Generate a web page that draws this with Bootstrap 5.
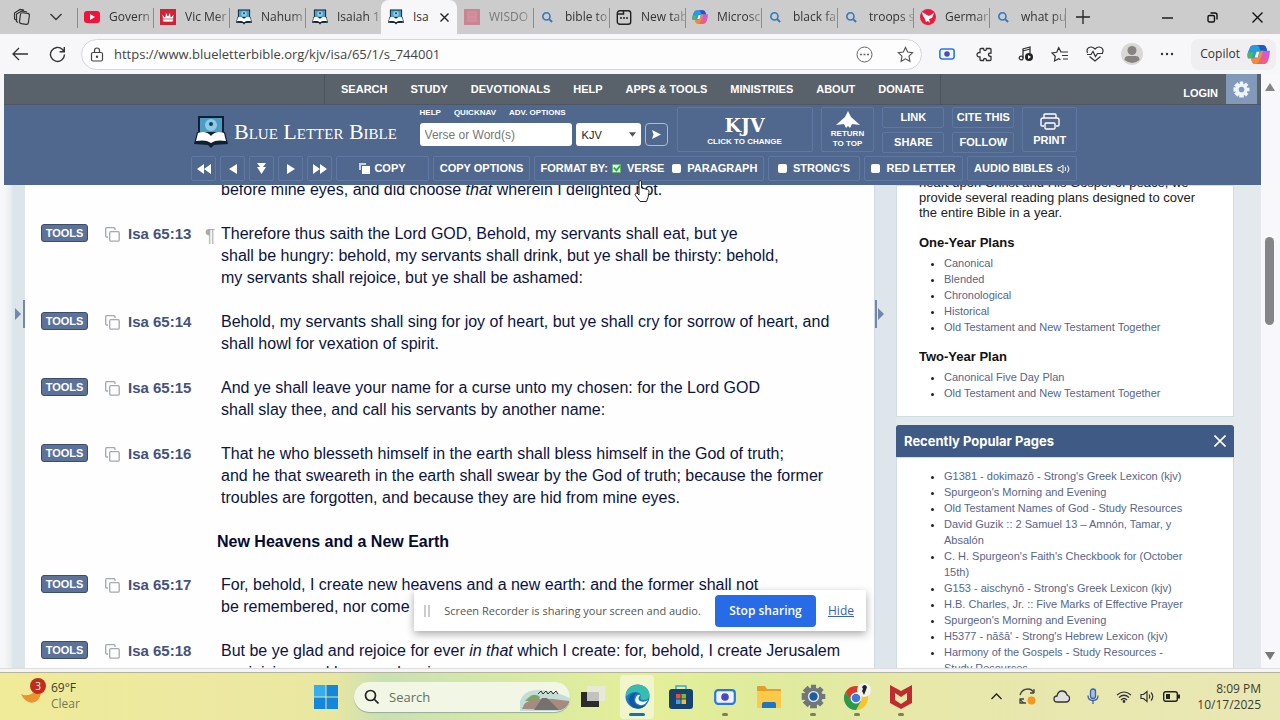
<!DOCTYPE html>
<html lang="en">
<head>
<meta charset="utf-8">
<meta name="viewport" content="width=device-width, initial-scale=1">
<title>Isaiah 65 (KJV) - Blue Letter Bible</title>
<link href="https://cdn.jsdelivr.net/npm/bootstrap@5.3.0/dist/css/bootstrap.min.css" rel="stylesheet">
<style>
:root { --ui: "Open Sans", "Noto Sans", sans-serif; --web: "Liberation Sans", Arial, sans-serif; --blb: #50678e; --line: #5f78a1; }
body { font-family: var(--ui); font-size: 12px; line-height: 16px; background: #f7f7f9; }
svg { display: block; flex: none; }
button { font: inherit; color: inherit; background: none; border: 0; padding: 0; }
a { text-decoration: none; }

/* browser tabs */
.tabstrip { height: 34px; background: #cdcccd; color: #333; }
.tabtools { width: 77px; padding-left: 13px; gap: 19px; }
.tabitem { flex: 0 1 76px; min-width: 0; height: 34px; gap: 9px; padding-left: 7px; position: relative; text-align: left; }
.tabitem::before { content: ""; position: absolute; left: 0; top: 8px; height: 20px; border-left: 1px solid #8d8b8e; }
.tabitem span { overflow: hidden; white-space: nowrap; flex: 1; min-width: 0; -webkit-mask-image: linear-gradient(90deg, #000 70%, #0004); mask-image: linear-gradient(90deg, #000 70%, #0004); }
.tabitem.current { background: #f7f7f9; border-radius: 8px 8px 0 0; }
.tabitem.current::before, .tabitem.current + .tabitem::before { display: none; }
.tabitem.current span { mask-image: none; -webkit-mask-image: none; }
.tabitem.quiet { color: #777; }
.tabitem.plus { padding-left: 11px; }
.magicon { margin: 0 3px 0 2px; }
.wincontrols { gap: 34px; padding-right: 17px; color: #111; }

/* address row */
.addressrow { height: 40px; padding: 0 4px 0 12px; color: #333; }
.omnibox { height: 31px; border: 1px solid #d6d5d8; border-radius: 16px; background: #fdfdfe; padding: 0 7px 0 8px; margin: 0 17px 0 15px; }
.omnibox input { border: 0; background: none; outline: 0; font-size: 13px; color: #444; padding: 0; margin-left: 10px; min-width: 0; }
.toolset { gap: 17px; }
.copilot { background: #efeff1; border-radius: 8px; height: 31px; padding: 0 6px 0 9px; gap: 7px; }

/* site header */
.viewport { min-height: 0; background: linear-gradient(90deg, #f7f7f9 4px, #e8edf0 11px, #dbe5ea 13px, #dbe5ea 25px, #e4e9ed 1000px); overflow: hidden; }
.siteheader { margin-left: 4px; font-family: var(--web); font-weight: 700; font-size: 11px; line-height: 13px; color: #fff; }
.siteheader a { color: #fff; }
.menubar { height: 31px; background: #59616b; border-bottom: 1px solid #4d5661; position: relative; }
.mainmenu { gap: 23px; border: solid #4b535d; border-width: 0 1px; padding: 0 16px; }
.userlinks { position: absolute; right: 0; top: 0; height: 30px; gap: 8px; padding-right: 4px; }
.gear { width: 31px; height: 30px; background: #8299ba; display: grid; place-items: center; }
.bluebar { height: 80px; background: var(--blb); padding-top: 2px; }
.headinner { width: 889px; max-width: 100%; margin: 0 auto; padding-left: 3px; }
.hbtn { border: 1px solid var(--line); display: flex; align-items: center; justify-content: center; white-space: nowrap; border-radius: 2px; }
.toprow { height: 49px; }
.brand { width: 230px; padding-left: 3px; gap: 6px; font: 22px/24px "Liberation Serif", serif; font-variant: small-caps; }
.quick { font-size: 8px; line-height: 10px; gap: 13px; padding: 1px 0 5px; }
.finder input { width: 152px; height: 23px; border: 0; border-radius: 3px; padding: 0 5px; font: 12px var(--web); color: #333; }
.finder input::placeholder { color: #777; }
.finder select { width: 65px; height: 23px; border: 0; border-radius: 3px; font: 11px var(--web); color: #222; padding: 0 6px; appearance: none; background: #fff url("data:image/svg+xml,%3Csvg xmlns='http://www.w3.org/2000/svg' viewBox='0 0 8 5'%3E%3Cpath d='M0 0h8L4 5z' fill='%23555'/%3E%3C/svg%3E") no-repeat right 5px center / 7px 5px; }
.go { width: 23px; height: 23px; border: 1px solid #a9bad3; border-radius: 4px; display: grid; place-items: center; }
.version { width: 137px; height: 45px; flex-direction: column; font-size: 8px; line-height: 10px; margin-left: 9px; }
.version b { font: 700 19px/24px "DejaVu Serif", serif; }
.totop { width: 54px; height: 45px; flex-direction: column; font-size: 8px; line-height: 10px; text-align: center; }
.pair .hbtn { width: 62px; height: 21px; }
.print { width: 55px; height: 45px; flex-direction: column; gap: 4px; }
.toolrow { gap: 4px; }
.toolrow .hbtn { height: 25px; }
.arrowbtn { width: 25px; }
.w-copy { width: 93px; }
.w-options { width: 97px; }
.w-strongs { width: 92px; }
.w-red { width: 99px; }
.w-audio { width: 110px; }
.siteheader input[type=checkbox] { appearance: none; width: 9px; height: 9px; margin: 0 6px 0 0; border-radius: 2px; background: #fff; }
.siteheader input[type=checkbox]:checked { background: #fff url("data:image/svg+xml,%3Csvg xmlns='http://www.w3.org/2000/svg' viewBox='0 0 10 10'%3E%3Crect x='.5' y='.5' width='9' height='9' rx='1' fill='%23dff5df' stroke='%2349b05a'/%3E%3Cpath d='M2 4l3 3 4-5' fill='none' stroke='%232fa347' stroke-width='2'/%3E%3C/svg%3E"); }

/* page body */
.pagebody { min-height: 0; overflow: hidden; padding-left: 25px; font-family: var(--web); }
.passage { flex: 1; background: #fefefe; padding: 0 16px; overflow: hidden; position: relative; }
.verses { margin-top: -6px; font-size: 16px; line-height: 22px; color: #0b1444; }
.verse { display: flex; margin-bottom: 22px; white-space: nowrap; }
.verse p, .verses h2 { margin: 0; }
.verses h2 { font-size: 16px; line-height: 22px; font-weight: 700; color: #050b33; margin: 0 0 21px 176px; }
.ref { width: 180px; display: flex; align-items: flex-start; flex: none; }
.ref a { color: #43527f; font-size: 15px; font-weight: 700; margin-left: 8px; line-height: 21px; }
.ref svg { margin: 4px 0 0 17px; }
.toolsbtn { width: 47px; height: 18px; margin-top: 1px; border: 1px solid #3b4d6d; border-radius: 3px; background: #5c7299; color: #fff; font-size: 11px; font-weight: 700; line-height: 16px; }
.pilcrow { width: 16px; margin-left: -16px; color: #aaa; font-size: 19px; line-height: 26px; height: 22px; }
.gutter { width: 22px; background: #dee6ec; border-left: 1px solid #d0dae2; position: relative; }
.handle { position: absolute; top: 115px; }
.handle.start { left: 15px; top: 226px; }
.sidebar { width: 338px; flex: none; }
.sidebox { background: #fff; border: 1px solid #d0dce3; padding: 0 22px; color: #222; font-size: 13px; line-height: 15px; }
.plans { padding-bottom: 1px; }
.plans p { margin: -11px 0 15px; }
.popular { padding-top: 10px; }
.sidebox h3 { font-size: 13px; line-height: 15px; font-weight: 700; color: #111; margin: 0 0 5px; }
.sidebox ul { padding-left: 25px; margin: 0 0 14px; font-size: 11px; line-height: 16px; }
.sidebox li::marker { color: #222; }
.sidebox a { color: #56658d; }
.sidehead { height: 32px; background: #3f5a85; border-radius: 3px 3px 0 0; margin-top: 8px; padding: 0 8px; color: #fff; font: 700 13px/16px Inter, sans-serif; }
.rightpad { width: 27px; flex: none; }
.scroller { width: 19px; flex: none; background: #f8f8fa; padding: 9px 2px 8px 0; }
.scroller i { width: 9px; height: 88px; border-radius: 5px; background: #858588; margin-top: 146px; }

/* overlays */
.sharebar { position: absolute; left: 50%; transform: translateX(-50%); bottom: 37px; width: 452px; height: 41px; background: #fff; box-shadow: 0 3px 8px #0005; color: #555; padding: 0 12px 0 10px; white-space: nowrap; z-index: 3; }
.sharebar span { font-size: 11px; }
.sharebar a { margin-left: 12px; color: #3a62b5; }
.stopbtn { width: 101px; height: 32px; background: #286be6; color: #fff; border-radius: 4px; font-weight: 600; }
.pointer { position: absolute; left: 634px; top: 106px; z-index: 4; }

/* taskbar */
.taskbar { height: 48px; padding-right: 48px; border-top: 1px solid #b5b59c; color: #3d3d2e; background: linear-gradient(90deg, #efeb98 0, #ece8a2 18%, #e8e7a0 26%, #c9e0b4 30%, #d5e8a8 38%, #e5ef98 50%, #dfeb9d 60%, #e7e8aa 72%, #e9e7b5 100%); }
.bottomedge { height: 4px; background: #f5f5f6; border-top: 1px solid #dddde2; }
.weather { position: absolute; left: 21px; top: 3px; gap: 5px; }
.weather small { font-size: 12px; color: #77775a; }
.tray { position: absolute; right: 19px; top: 0; height: 47px; gap: 17px; }
.searchpill { width: 216px; height: 30px; border-radius: 15px; background: #f1f7e4; box-shadow: 0 1px 1px #9a9; overflow: hidden; padding-left: 10px; margin-right: 6px; }
.searchpill input { border: 0; background: none; outline: 0; width: 120px; margin-left: 10px; padding: 0; font-size: 13px; }
.searchpill input::placeholder { color: #66705f; }
.applist { gap: 10px; }
.app { width: 34px; height: 44px; display: flex; flex-direction: column; align-items: center; justify-content: center; position: relative; border-radius: 4px; }
.app.running::after { content: ""; position: absolute; bottom: 3px; width: 6px; height: 3px; border-radius: 2px; background: #7c805a; }
.app.active { background: #f1f5ca; }
.app.active::after { content: ""; position: absolute; bottom: 3px; width: 16px; height: 3px; border-radius: 2px; background: #1271b8; }
</style>
</head>
<body class="vh-100 d-flex flex-column overflow-hidden">
<svg width="0" height="0" class="position-absolute" aria-hidden="true">
  <symbol id="blb" viewBox="0 0 34 34"><path d="M4 1h26v20H4z" fill="#0e2134"/><path d="M6 3h22v17H6z" fill="#4c9cc4"/><circle cx="17" cy="10" r="6" fill="#8ccbe5"/><circle cx="17" cy="9" r="2" fill="#183a55"/><path d="M3 17L0 29l14 1 3 3 3-3 14-1-3-12z" fill="#0e2134"/><path d="M4 18c5-2 10-1 13 3 3-4 8-5 13-3l2 8c-6-1-11-1-15 2-4-3-9-3-15-2z" fill="#fff"/></symbol>
  <symbol id="mag" viewBox="0 0 12 12"><circle cx="4.8" cy="4.8" r="3.9" fill="none" stroke="#3179bd" stroke-width="1.7"/><path d="M7.500 7.500l3.500 3.500" stroke="#3179bd" stroke-width="2.200"/></symbol>
  <symbol id="copy" viewBox="0 0 15 15"><path d="M3 10H1.700Q.7 10 .7 9V1.700Q.7.7 1.700.7H9q1 0 1 1V3" fill="none" stroke="#a3a7ae" stroke-width="1.300"/><rect x="4.700" y="4.700" width="9.500" height="9.500" rx="1.200" fill="#fff" stroke="#a3a7ae" stroke-width="1.300"/></symbol>
  <symbol id="cop" viewBox="0 0 24 24"><path d="M8 2h8q3 0 4 3l1 3h3q0 5-2 10-1 4-5 4H9q-3 0-4-3l-1-3H1q-1-3 0-6l2-5q1-3 5-3z" fill="#d45ad0"/><path d="M8 2h8q3 0 4 3l1 3h-5q-2 0-3 3l-2 5H1q-1-3 0-6l2-5q1-3 5-3z" fill="#259be0"/><path d="M1 10h6l-2 6H1q-1-3 0-6z" fill="#4cb95c"/><path d="M10 2h6q3 0 4 3l1 3h-5q-3 0-3-3 0-2-3-3z" fill="#2356c6"/><path d="M4 16h5q2 0 3-2l1-3q1-3 3-3h1l-3 9q-1 5-5 5-3 0-4-3z" fill="#f48b35"/><path d="M9 22q3 0 4-4l1-2h8l-1 3q-1 3-4 3z" fill="#ee5f78"/><path d="M10 9h3l-2 6H8z" fill="#fff"/></symbol>
  <symbol id="rec" viewBox="0 0 22 16"><rect x="1.200" y="1.200" width="19.600" height="13.600" rx="3" fill="#eef5ff" stroke="#2877e8" stroke-width="2.200"/><circle cx="11" cy="8" r="3.800" fill="#4c48c4"/></symbol>
</svg>

<nav class="tabstrip d-flex flex-shrink-0 align-items-center" aria-label="Browser tabs">
  <div class="tabtools d-flex align-items-center flex-shrink-0">
    <button aria-label="Workspaces"><svg width="18" height="18" viewBox="0 0 18 18" fill="none" stroke="#333" stroke-width="1.200"><rect x="7" y="5" width="9" height="11" rx="2" transform="rotate(8 11 10)"/><path d="M5 14.500L3.500 13.500V6L9 3l5 1M3 12l-1.500-1V5L7 1.500l4 .7"/></svg></button>
    <button aria-label="Tab list"><svg width="12" height="8" viewBox="0 0 12 8" fill="none" stroke="#333" stroke-width="1.300"><path d="M.5 1L6 6.500 11.500 1"/></svg></button>
  </div>
  <button class="tabitem d-flex align-items-center"><svg width="16" height="12" viewBox="0 0 16 12"><rect width="16" height="12" rx="3" fill="#f2123c"/><path d="M6 3v6l5-3z" fill="#fff"/></svg><span>Govern</span></button>
  <button class="tabitem d-flex align-items-center"><svg width="16" height="16" viewBox="0 0 16 16"><path d="M0 0h16v16H0z" fill="#cd2334"/><path d="M3 13L2 5l3 3 1-5 2 4 2-4 1 5 3-3-1 8zM3 10h10" fill="#fff" stroke="#cd2334" stroke-width=".7"/></svg><span>Vic Mer</span></button>
  <button class="tabitem d-flex align-items-center"><svg width="16" height="16"><use href="#blb"/></svg><span>Nahum</span></button>
  <button class="tabitem d-flex align-items-center"><svg width="16" height="16"><use href="#blb"/></svg><span>Isaiah 1</span></button>
  <button class="tabitem current d-flex align-items-center"><svg width="16" height="16"><use href="#blb"/></svg><span>Isa</span><svg class="me-2" width="9" height="9" viewBox="0 0 9 9" stroke="#222" stroke-width="1.400"><path d="M.5.5l8 8M8.500.5l-8 8"/></svg></button>
  <button class="tabitem quiet d-flex align-items-center"><svg width="16" height="16"><path d="M0 0h16v16H0z" fill="#c98591"/><path d="M3 2h10v11H3z" fill="#d08f9b"/></svg><span>WISDO</span></button>
  <button class="tabitem d-flex align-items-center"><svg class="magicon" width="11" height="11"><use href="#mag"/></svg><span>bible to</span></button>
  <button class="tabitem d-flex align-items-center"><svg width="16" height="16" viewBox="0 0 15 16"><rect x=".8" y="1.800" width="13.400" height="13.400" rx="2.500" fill="none" stroke="#222" stroke-width="1.400"/><path d="M1 5h6V2M3.500 9h2m1 0h2m1 0h2" fill="none" stroke="#222" stroke-width="1.500"/></svg><span>New tab</span></button>
  <button class="tabitem d-flex align-items-center"><svg width="16" height="16"><use href="#cop"/></svg><span>Microsc</span></button>
  <button class="tabitem d-flex align-items-center"><svg class="magicon" width="11" height="11"><use href="#mag"/></svg><span>black fa</span></button>
  <button class="tabitem d-flex align-items-center"><svg class="magicon" width="11" height="11"><use href="#mag"/></svg><span>troops s</span></button>
  <button class="tabitem d-flex align-items-center"><svg width="16" height="16" viewBox="0 0 16 16"><circle cx="8" cy="8" r="8" fill="#ea1c3d"/><path d="M2 3l5 3 2 1 5-3-2 5-3 1 1 4-2-2-2 1-1-3-2-3z" fill="#fff"/></svg><span>Germar</span></button>
  <button class="tabitem d-flex align-items-center"><svg class="magicon" width="11" height="11"><use href="#mag"/></svg><span>what pu</span></button>
  <button class="tabitem plus d-flex align-items-center" aria-label="New tab"><svg width="14" height="14" viewBox="0 0 14 14" stroke="#222" stroke-width="1.300"><path d="M7 0v14M0 7h14"/></svg></button>
  <div class="wincontrols d-flex align-items-center ms-auto flex-shrink-0">
    <button aria-label="Minimize"><svg width="11" height="11" viewBox="0 0 11 11" stroke="#111" stroke-width="1.400"><path d="M0 6h11"/></svg></button>
    <button aria-label="Restore"><svg width="11" height="11" viewBox="0 0 11 11" fill="none" stroke="#111" stroke-width="1.400"><rect x="1" y="3.500" width="6.500" height="6.500" rx="1.500"/><path d="M3.500 1H8q2 0 2 2v4.500"/></svg></button>
    <button aria-label="Close"><svg width="11" height="11" viewBox="0 0 11 11" stroke="#111" stroke-width="1.400"><path d="M.5.5l10 10m0-10l-10 10"/></svg></button>
  </div>
</nav>

<div class="addressrow d-flex align-items-center flex-shrink-0">
  <button class="me-3" aria-label="Back"><svg width="17" height="14" viewBox="0 0 17 14" fill="none" stroke="#333" stroke-width="1.300"><path d="M16 7H1M7 1L1 7l6 6"/></svg></button>
  <button class="ms-1" aria-label="Refresh"><svg width="17" height="17" viewBox="0 0 17 17" fill="none" stroke="#333" stroke-width="1.400"><path d="M15.500 8.500A7 7 0 1 1 13.500 3.500l1.500 2M15.300 1v4.700h-4.700"/></svg></button>
  <div class="omnibox d-flex align-items-center flex-grow-1">
    <svg width="14" height="15" viewBox="0 0 14 15" fill="none" stroke="#444" stroke-width="1.200"><rect x="1.500" y="5.500" width="11" height="8.500" rx="1.500"/><path d="M4.500 5.500V3.500a2.500 2.500 0 0 1 5 0v2"/><circle cx="7" cy="9.800" r=".6" fill="#444"/></svg>
    <input class="flex-grow-1" type="text" aria-label="Address" value="https://www.blueletterbible.org/kjv/isa/65/1/s_744001">
    <button class="me-4" aria-label="Site options"><svg width="17" height="17" viewBox="0 0 17 17" fill="none" stroke="#666"><circle cx="8.500" cy="8.500" r="7.500"/><path d="M4 8.500h2m1.500 0h2m1.500 0h2" stroke-width="1.500"/></svg></button>
    <button aria-label="Add favorite"><svg width="17" height="17" viewBox="0 0 18 18" fill="none" stroke="#555" stroke-width="1.200"><path d="M9 1.500l2.300 4.900 5.300.7-3.900 3.700 1 5.400L9 13.600l-4.700 2.600 1-5.400L1.400 7.100l5.300-.7z"/></svg></button>
  </div>
  <div class="toolset d-flex align-items-center">
    <button aria-label="Screen recorder"><svg width="16" height="12"><use href="#rec"/></svg></button>
    <button class="mx-1" aria-label="Extensions"><svg width="17" height="17" viewBox="0 0 17 17" fill="none" stroke="#333" stroke-width="1.300"><path d="M5 2.500h2.500q0 2 1.500 2t1.500-2H14q1 0 1 1V7q-2.500 0-2.500 1.700T15 10.500v3q0 1-1 1h-3.500q0-2-1.500-2t-1.500 2H5q-1 0-1-1V11q-3 0-3-2.300T4 6.500v-3q0-1 1-1z"/></svg></button>
    <button class="ms-1" aria-label="Media"><svg width="16" height="16" viewBox="0 0 16 16" fill="none" stroke="#333" stroke-width="1.300"><path d="M5 12V3l7-2v6M5 5l7-2"/><circle cx="3.200" cy="12" r="1.900"/><circle cx="11" cy="11" r="4" fill="#222" stroke="none"/><path d="M10 9v4l3-2z" fill="#fff" stroke="none"/></svg></button>
    <button aria-label="Favorites"><svg width="18" height="17" viewBox="0 0 18 17" fill="none" stroke="#333" stroke-width="1.200"><path d="M9.500 13.800l-1.700-1L3.500 15l.8-4.800L1 7l4.700-.7 2-4.600L10 6h7M11 9.500h6M12 13h5"/></svg></button>
    <button aria-label="Browser essentials"><svg width="18" height="16" viewBox="0 0 18 16" fill="none" stroke="#333" stroke-width="1.200"><path d="M1.500 7Q0 3 3 1.500T9 3q3-3 6-1.500T16.500 7M3.500 10.500L9 15l5.500-4.500M1 8.500h4l2-3 2.500 5 2-3H17"/></svg></button>
    <button aria-label="Profile"><svg width="22" height="22" viewBox="0 0 22 22"><circle cx="11" cy="11" r="11" fill="#d9d8d6"/><circle cx="11" cy="7.500" r="4.500" fill="#858483"/><path d="M3.500 17q0-4 4-4h7q4 0 4 4-7 6-15 0z" fill="#858483"/></svg></button>
    <button aria-label="More"><svg width="14" height="4" viewBox="0 0 14 4" fill="#333"><circle cx="2" cy="2" r="1.200"/><circle cx="7" cy="2" r="1.200"/><circle cx="12" cy="2" r="1.200"/></svg></button>
    <button class="copilot d-flex align-items-center"><span>Copilot</span><svg width="23" height="23"><use href="#cop"/></svg></button>
  </div>
</div>

<div class="viewport d-flex flex-grow-1 position-relative">
  <div class="d-flex flex-column flex-grow-1 overflow-hidden">
    <header class="siteheader">
      <div class="menubar d-flex justify-content-center">
        <nav class="mainmenu d-flex align-items-center">
          <a href="#">SEARCH</a><a href="#">STUDY</a><a href="#">DEVOTIONALS</a><a href="#">HELP</a><a href="#">APPS &amp; TOOLS</a><a href="#">MINISTRIES</a><a href="#">ABOUT</a><a href="#">DONATE</a>
        </nav>
        <div class="userlinks d-flex align-items-center"><a href="#" class="pt-2">LOGIN</a>
          <button class="gear" aria-label="Settings"><svg width="17" height="17" viewBox="-9 -9 18 18"><g fill="#eef4fb"><path id="c" d="M-1.800-8.500h3.600L2.500 8.500h-5z"/><use href="#c" transform="rotate(45)"/><use href="#c" transform="rotate(90)"/><use href="#c" transform="rotate(135)"/><circle r="6.200"/></g><circle r="3" fill="#8299ba"/></svg></button></div>
      </div>
      <div class="bluebar">
        <div class="headinner">
          <div class="toprow d-flex">
            <a href="#" class="brand d-flex align-items-center"><svg width="34" height="34"><use href="#blb"/></svg>Blue Letter Bible</a>
            <div class="finder">
              <div class="quick d-flex"><a href="#">HELP</a><a href="#">QUICKNAV</a><a href="#">ADV. OPTIONS</a></div>
              <form class="d-flex gap-1"><input type="text" aria-label="Verse or words" placeholder="Verse or Word(s)"><select aria-label="Version"><option>KJV</option></select><button type="button" class="go" aria-label="Go"><svg width="9" height="9" viewBox="0 0 9 9"><path d="M0 0l9 4.500L0 9l1.500-4.500z" fill="#fff"/></svg></button></form>
            </div>
            <button class="hbtn version"><b>KJV</b><span>CLICK TO CHANGE</span></button>
            <button class="hbtn totop mx-2"><svg width="24" height="18" viewBox="0 0 24 18"><path d="M12 0l3 6 9 8-8-1-2 4-2-2-2 2-2-4-8 1 9-8z" fill="#fff"/></svg>RETURN<br>TO TOP</button>
            <div class="pair d-flex flex-column gap-1"><button class="hbtn">LINK</button><button class="hbtn">SHARE</button></div>
            <div class="pair d-flex flex-column gap-1 mx-2"><button class="hbtn">CITE THIS</button><button class="hbtn">FOLLOW</button></div>
            <button class="hbtn print"><svg width="20" height="17" viewBox="0 0 20 17" fill="none" stroke="#fff" stroke-width="1.400"><path d="M4 5V2q0-1 1-1h10q1 0 1 1v3M4 13H2q-1 0-1-1V7q0-2 2-2h14q2 0 2 2v5q0 1-1 1h-2"/><rect x="5" y="10" width="10" height="6" rx="1"/></svg>PRINT</button>
          </div>
          <div class="toolrow d-flex">
            <button class="hbtn arrowbtn" aria-label="First"><svg width="14" height="10" viewBox="0 0 14 10" fill="#fff"><path d="M7 0v10L0 5zM14 0v10L7 5z"/></svg></button>
            <button class="hbtn arrowbtn" aria-label="Previous"><svg width="8" height="10" viewBox="0 0 8 10" fill="#fff"><path d="M8 0v10L0 5z"/></svg></button>
            <button class="hbtn arrowbtn" aria-label="Down"><svg width="9" height="12" viewBox="0 0 9 12" fill="#fff"><path d="M0 0h9L6 4h3l-4.500 7L0 4h3z"/></svg></button>
            <button class="hbtn arrowbtn" aria-label="Next"><svg width="8" height="10" viewBox="0 0 8 10" fill="#fff"><path d="M0 0v10l8-5z"/></svg></button>
            <button class="hbtn arrowbtn" aria-label="Last"><svg width="14" height="10" viewBox="0 0 14 10" fill="#fff"><path d="M0 0v10l7-5zM7 0v10l7-5z"/></svg></button>
            <button class="hbtn w-copy"><svg class="me-1" width="11" height="11" viewBox="0 0 11 11"><path d="M0 0h7v2H2v5H0z" fill="#c5d4ea"/><path d="M3 3h8v8H3z" fill="#fff"/></svg>COPY</button>
            <button class="hbtn w-options">COPY OPTIONS</button>
            <div class="hbtn flex-grow-1"><span class="me-1">FORMAT BY:</span><input type="checkbox" id="fv" checked><label for="fv" class="me-2">VERSE</label><input type="checkbox" id="fp"><label for="fp">PARAGRAPH</label></div>
            <div class="hbtn w-strongs"><input type="checkbox" id="fs"><label for="fs">STRONG'S</label></div>
            <div class="hbtn w-red"><input type="checkbox" id="fr"><label for="fr">RED LETTER</label></div>
            <button class="hbtn w-audio">AUDIO BIBLES<svg class="ms-1" width="13" height="10" viewBox="0 0 13 10" fill="none" stroke="#fff"><path d="M1 3.500h2L6 1v8L3 6.500H1zM8 3q1.500 2 0 4M10.500 1.500q3 3.500 0 7"/></svg></button>
          </div>
        </div>
      </div>
    </header>

    <div class="pagebody d-flex flex-grow-1">
      <main class="passage">
        <div class="verses">
          <div class="verse"><div class="ref"></div><p>before mine eyes, and did choose <i>that</i> wherein I delighted not.</p></div>
          <div class="verse"><div class="ref"><button class="toolsbtn">TOOLS</button><svg width="15" height="15"><use href="#copy"/></svg><a href="#">Isa 65:13</a></div><span class="pilcrow">¶</span><p>Therefore thus saith the Lord GOD, Behold, my servants shall eat, but ye<br>shall be hungry: behold, my servants shall drink, but ye shall be thirsty: behold,<br>my servants shall rejoice, but ye shall be ashamed:</p></div>
          <div class="verse"><div class="ref"><button class="toolsbtn">TOOLS</button><svg width="15" height="15"><use href="#copy"/></svg><a href="#">Isa 65:14</a></div><p>Behold, my servants shall sing for joy of heart, but ye shall cry for sorrow of heart, and<br>shall howl for vexation of spirit.</p></div>
          <div class="verse"><div class="ref"><button class="toolsbtn">TOOLS</button><svg width="15" height="15"><use href="#copy"/></svg><a href="#">Isa 65:15</a></div><p>And ye shall leave your name for a curse unto my chosen: for the Lord GOD<br>shall slay thee, and call his servants by another name:</p></div>
          <div class="verse"><div class="ref"><button class="toolsbtn">TOOLS</button><svg width="15" height="15"><use href="#copy"/></svg><a href="#">Isa 65:16</a></div><p>That he who blesseth himself in the earth shall bless himself in the God of truth;<br>and he that sweareth in the earth shall swear by the God of truth; because the former<br>troubles are forgotten, and because they are hid from mine eyes.</p></div>
          <h2>New Heavens and a New Earth</h2>
          <div class="verse"><div class="ref"><button class="toolsbtn">TOOLS</button><svg width="15" height="15"><use href="#copy"/></svg><a href="#">Isa 65:17</a></div><p>For, behold, I create new heavens and a new earth: and the former shall not<br>be remembered, nor come</p></div>
          <div class="verse"><div class="ref"><button class="toolsbtn">TOOLS</button><svg width="15" height="15"><use href="#copy"/></svg><a href="#">Isa 65:18</a></div><p>But be ye glad and rejoice for ever <i>in that</i> which I create: for, behold, I create Jerusalem<br>a rejoicing, and her people a joy.</p></div>
        </div>
      </main>
      <div class="gutter flex-shrink-0"><svg class="handle" width="9" height="28" viewBox="0 0 9 28" fill="#7486ab"><path d="M0 0h2v28H0zM3 8v12l6-6z"/></svg></div>
      <aside class="sidebar">
        <div class="sidebox plans">
          <p>heart upon Christ and His Gospel of peace, we<br>provide several reading plans designed to cover<br>the entire Bible in a year.</p>
          <h3>One-Year Plans</h3>
          <ul><li><a href="#">Canonical</a></li><li><a href="#">Blended</a></li><li><a href="#">Chronological</a></li><li><a href="#">Historical</a></li><li><a href="#">Old Testament and New Testament Together</a></li></ul>
          <h3>Two-Year Plan</h3>
          <ul><li><a href="#">Canonical Five Day Plan</a></li><li><a href="#">Old Testament and New Testament Together</a></li></ul>
        </div>
        <div class="sidehead d-flex align-items-center justify-content-between">Recently Popular Pages<button aria-label="Close panel"><svg width="12" height="12" viewBox="0 0 12 12" stroke="#fff" stroke-width="1.600"><path d="M.5.5l11 11m0-11l-11 11"/></svg></button></div>
        <div class="sidebox popular">
          <ul><li><a href="#">G1381 - dokimazō - Strong's Greek Lexicon (kjv)</a></li><li><a href="#">Spurgeon's Morning and Evening</a></li><li><a href="#">Old Testament Names of God - Study Resources</a></li><li><a href="#">David Guzik :: 2 Samuel 13 – Amnón, Tamar, y<br>Absalón</a></li><li><a href="#">C. H. Spurgeon's Faith's Checkbook for (October<br>15th)</a></li><li><a href="#">G153 - aischynō - Strong's Greek Lexicon (kjv)</a></li><li><a href="#">H.B. Charles, Jr. :: Five Marks of Effective Prayer</a></li><li><a href="#">Spurgeon's Morning and Evening</a></li><li><a href="#">H5377 - nāšā' - Strong's Hebrew Lexicon (kjv)</a></li><li><a href="#">Harmony of the Gospels - Study Resources -<br>Study Resources</a></li></ul>
        </div>
      </aside>
      <div class="rightpad"></div>
    </div>
  </div>
  <div class="scroller d-flex flex-column align-items-center">
    <svg width="10" height="8" viewBox="0 0 10 8"><path d="M5 0l5 8H0z" fill="#858588"/></svg><i></i>
    <svg class="mt-auto" width="10" height="8" viewBox="0 0 10 8"><path d="M5 8l5-8H0z" fill="#77777a"/></svg>
  </div>
  <svg class="handle start" width="10" height="28" viewBox="0 0 10 28" fill="#7486ab"><path d="M8 0h2v28H8zM0 8v12l6-6z"/></svg>
  <div class="sharebar d-flex align-items-center">
    <svg width="6" height="12" viewBox="0 0 6 12" fill="#ccc"><path d="M0 0h2v12H0zM4 0h2v12H4z"/></svg>
    <span class="mx-auto">Screen Recorder is sharing your screen and audio.</span>
    <button class="stopbtn">Stop sharing</button><a href="#" class="text-decoration-underline">Hide</a>
  </div>
  <svg class="pointer" width="16" height="22" viewBox="0 0 16 22"><path d="M5 13V2q0-1.500 1.200-1.500T7.500 2v6l6 1.500q2 .5 1.500 3l-1 5-1.500 4H6l-4.500-6q-1-1.500 0-2T3 13l2 2z" fill="#fff" stroke="#222"/></svg>
</div>
<div class="bottomedge flex-shrink-0"></div>

<footer class="taskbar d-flex align-items-center justify-content-center position-relative flex-shrink-0">
  <div class="weather d-flex"><svg width="25" height="30" viewBox="0 0 25 30"><path d="M0 18q6 3 12-1 5-4 6-8 5 12-4 17Q5 29 0 18z" fill="#ec942f"/><circle cx="17" cy="10" r="8" fill="#c02d1d"/><text x="17" y="14" text-anchor="middle" font-size="10" fill="#fff">3</text></svg><div class="mt-1">69°F<br><small>Clear</small></div></div>
  <button class="me-3" aria-label="Start"><svg width="24" height="24" viewBox="0 0 24 24" fill="#1287dc"><path d="M0 0h11.500v11.500H0z" fill="#35aef0"/><path d="M12.500 0H24v11.500H12.500zM0 12.500h11.500V24H0zM12.500 12.500H24V24H12.500z"/></svg></button>
  <label class="searchpill d-flex align-items-center"><svg width="15" height="15" viewBox="0 0 15 15" fill="none" stroke="#222" stroke-width="1.700"><circle cx="6.500" cy="6.500" r="5"/><path d="M10 10l4.500 4.500"/></svg><input type="text" placeholder="Search" aria-label="Search">
    <svg class="ms-auto" width="50" height="30" viewBox="0 0 50 30"><path d="M0 19q4-11 18-11t32 8v13H0z" fill="#c4ddd9"/><path d="M8 16q6-6 12-1l-2 4H5z" fill="#7aa862"/><path d="M2 27q2-8 13-10h18l16 2v5l-8 4z" fill="#a68b80"/><path d="M14 28l8-12h5l12 12z" fill="#77716d"/><path d="M18 12l3-3 2 3 3-3 2 3 3-3 2 3 3-3 2 3" fill="none" stroke="#333"/></svg></label>
  <div class="applist d-flex">
    <button class="app" aria-label="Task view"><svg width="24" height="22" viewBox="0 0 24 22"><path d="M0 6h18v15H0z" fill="#2c2b2a"/><path d="M6 0h18v15H6z" fill="#e8e8e4" opacity=".8"/></svg></button>
    <button class="app active" aria-label="Edge"><svg width="25" height="25" viewBox="0 0 25 25"><circle cx="12.500" cy="12.500" r="12" fill="#1979c5"/><path d="M1 10C4-3 24-2 24.500 11q0 5-6 5-4 0-3-3 1-5-5-5-6 0-9.500 5z" fill="#38bcae"/><path d="M9 14c-1 6 4 10 12 7-4 5-13 5-16-1-3-7 2-12 7-11q-3 1-3 5z" fill="#1557a0"/><path d="M15 11q-3 4 0 6 4 2 8-1-3 6-8 5-7-2-4-8 2-3 4-2z" fill="#effaf8"/></svg></button>
    <button class="app" aria-label="Store"><svg width="24" height="24" viewBox="0 0 24 24"><path d="M7 5V1h10v4" fill="none" stroke="#39a9d8" stroke-width="1.500"/><rect y="4" width="24" height="20" rx="3" fill="#16436f"/><path d="M7 9h4.500v4.500H7z" fill="#e94f30"/><path d="M12.500 9H17v4.500h-4.500z" fill="#82b927"/><path d="M7 14.500h4.500V19H7z" fill="#33a6e3"/><path d="M12.500 14.500H17V19h-4.500z" fill="#f5bc2b"/></svg></button>
    <button class="app running" aria-label="Screen recorder"><svg width="22" height="16"><use href="#rec"/></svg></button>
    <button class="app" aria-label="Files"><svg width="24" height="22" viewBox="0 0 24 22"><path d="M0 1q0-1 1-1h7l2 3h13q1 0 1 1v17H0z" fill="#e0a02a"/><path d="M0 5h24v17H0z" fill="#fcca48"/><path d="M5 22v-4q0-2 2-2h10q2 0 2 2v4z" fill="#1d75c4"/></svg></button>
    <button class="app running" aria-label="Settings"><svg width="25" height="25" viewBox="-9 -9 18 18"><g fill="#70767a"><use href="#c"/><use href="#c" transform="rotate(45)"/><use href="#c" transform="rotate(90)"/><use href="#c" transform="rotate(135)"/><circle r="6.500"/></g><circle r="4" fill="#e5ebef"/><circle r="3" fill="#1c5ca0"/></svg></button>
    <button class="app running" aria-label="Chrome"><svg width="28" height="28" viewBox="0 0 28 28"><circle cx="13" cy="15" r="12" fill="#f6c62d"/><path d="M2.600 9A12 12 0 0 1 23.400 9H13L8 18z" fill="#d93a2d"/><path d="M2.600 9A12 12 0 0 0 13 27l5-9-10-1z" fill="#2b9a4a"/><circle cx="13" cy="15" r="5.500" fill="#fff"/><circle cx="13" cy="15" r="4.300" fill="#3979e7"/><circle cx="21" cy="7" r="7" fill="#f3f3f1"/><path d="M19 4q3-4 5 0l-1 3-2 5-2-4 1-2z" fill="#222"/></svg></button>
    <button class="app running" aria-label="McAfee"><svg width="22" height="24" viewBox="0 0 22 24"><path d="M0 0l11 6 11-6v18l-11 6-11-6zM5 8v7l6 4 6-4V8l-6 4z" fill="#c02b30" fill-rule="evenodd"/></svg></button>
  </div>
  <div class="tray d-flex align-items-center">
    <svg width="11" height="7" viewBox="0 0 11 7" fill="none" stroke="#222" stroke-width="1.300"><path d="M.5 6l5-5 5 5"/></svg>
    <svg width="17" height="17" viewBox="0 0 17 17" fill="none" stroke="#444" stroke-width="1.300"><path d="M1 7q2-6 8-6 4 0 6 4V1m0 4h-4M7 15H1v-4h4M1 11q2 3 4 4"/><circle cx="12.500" cy="12.500" r="4" fill="#f39a1e" stroke="none"/></svg>
    <svg width="17" height="13" viewBox="0 0 17 13"><path d="M4 12q-3 0-3-3t3-3q1-5 5-5t5 4q3 1 2.500 4T13 12z" fill="#dfe0df" stroke="#333" stroke-width="1.300"/></svg>
    <svg width="12" height="17" viewBox="0 0 12 17" fill="none" stroke="#3b62a6" stroke-width="1.300"><rect x="3.500" y="1" width="5" height="9.500" rx="2.500" fill="#a7bfe0"/><path d="M1 7.500q0 5 5 5t5-5M6 12.500V16"/></svg>
    <div class="d-flex align-items-center gap-2">
      <svg width="16" height="12" viewBox="0 0 16 12" fill="none" stroke="#333" stroke-width="1.200"><path d="M1 4q7-6 14 0M3 6.500q5-4.500 10 0M5 9q3-3 6 0"/><circle cx="8" cy="10.500" r=".8" fill="#333"/></svg>
      <svg width="15" height="13" viewBox="0 0 15 13" fill="none" stroke="#333" stroke-width="1.200"><path d="M1 4.500h2.500L7 1.500v10L3.500 8.500H1zM9 4.500q1.500 2 0 4M11 2.500q3.500 4 0 8"/></svg>
      <svg width="17" height="11" viewBox="0 0 17 11"><rect x=".7" y=".7" width="13.600" height="9.600" rx="2" fill="none" stroke="#222" stroke-width="1.400"/><path d="M3 3h4v5H3zM15 3.500h2v4h-2z" fill="#222"/></svg>
    </div>
    <div class="text-end">8:09 PM<br>10/17/2025</div>
  </div>
</footer>
<script src="https://cdn.jsdelivr.net/npm/bootstrap@5.3.0/dist/js/bootstrap.bundle.min.js"></script>
</body>
</html>
